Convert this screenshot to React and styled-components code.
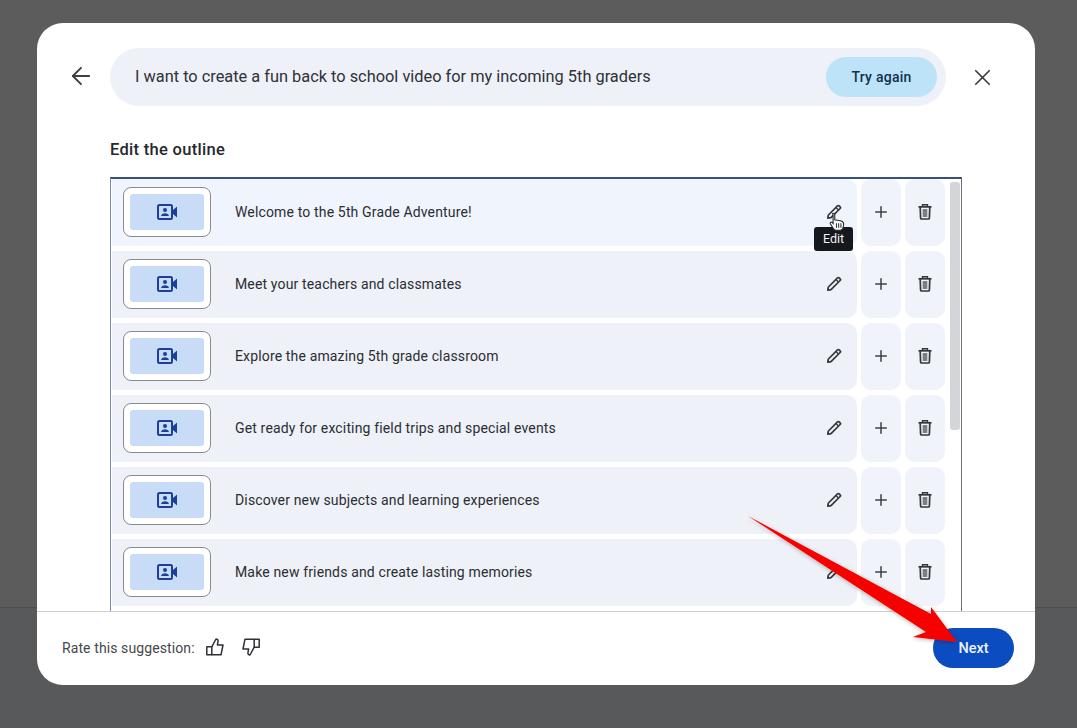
import React from "react";
import styled, { createGlobalStyle } from "styled-components";
import { ArrowLeft, X, Plus } from "lucide-react";

const Global = createGlobalStyle`
  html, body { margin: 0; padding: 0; }
  body { font-family: "Roboto", "Liberation Sans", sans-serif; }
`;

const Page = styled.div`
  position: relative;
  box-sizing: border-box;
  width: 1077px;
  height: 728px;
  overflow: hidden;
  padding: 23px 42px 43px 37px;
  background: linear-gradient(#5c5c5c 0 607px, #4e4e4e 607px 608px, #58595a 608px);
`;

const Modal = styled.div`
  display: flex;
  flex-direction: column;
  height: 100%;
  background: #fff;
  border-radius: 26px;
  overflow: hidden;
`;

const Header = styled.div`
  display: flex;
  align-items: center;
  padding: 25px 0 0 35px;
  height: 58px;
`;

const IconSlot = styled.button`
  display: flex;
  flex: none;
  align-items: center;
  justify-content: center;
  width: ${(p) => p.$w}px;
  margin-left: ${(p) => p.$ml || 0}px;
  padding: 0 0 ${(p) => p.$pb || 0}px;
  border: 0;
  background: none;
  color: #3c4043;
  svg { flex: none; }
`;

const PromptPill = styled.div`
  display: flex;
  flex: none;
  align-items: center;
  justify-content: space-between;
  box-sizing: border-box;
  width: 836px;
  height: 58px;
  margin-left: 20px;
  padding: 0 9px 0 25px;
  border-radius: 29px;
  background: #eef1f8;
`;

const PromptText = styled.span`
  padding-bottom: 2px;
  font-size: 16.37px;
  color: #2f3136;
`;

const RetryButton = styled.button`
  width: 111px;
  height: 40px;
  border: 0;
  border-radius: 20px;
  background: #bde3f8;
  color: #12304f;
  font: 500 14px "Roboto", sans-serif;
  letter-spacing: 0.25px;
`;

const Section = styled.div`
  flex: 1;
  min-height: 0;
  display: flex;
  flex-direction: column;
  padding: 34px 73px 0 73px;
`;

const Title = styled.h2`
  margin: 0 0 17px;
  font-size: 16.5px;
  line-height: 20px;
  font-weight: 500;
  color: #25282c;
  letter-spacing: 0.3px;
`;

const ListFrame = styled.div`
  position: relative;
  flex: 1;
  min-height: 0;
  box-sizing: border-box;
  overflow: hidden;
  padding: 0 16px 0 1px;
  border: 1px solid #6d6f73;
  border-top: 2px solid #37507f;
  border-left-color: #6f8cc0;
  border-bottom: 0;
  display: flex;
  flex-direction: column;
  gap: 5px;
`;

const ScrollThumb = styled.div`
  position: absolute;
  top: 3px;
  right: 1px;
  width: 10px;
  height: 248px;
  border-radius: 3px;
  background: #d4d5d8;
`;

const Row = styled.div`
  display: grid;
  grid-template-columns: 745px 40px 40px;
  column-gap: 4px;
  height: 67px;
  flex: none;
`;

const RowMain = styled.div`
  position: relative;
  display: flex;
  align-items: center;
  padding: 0 0 1px 11px;
  border-radius: 0 10px 10px 0;
  background: ${(p) => (p.$active ? "#f0f4fd" : "#eef1f8")};
`;

const Thumb = styled.div`
  box-sizing: border-box;
  display: flex;
  width: 88px;
  height: 50px;
  padding: 6px;
  background: #fff;
  border: 1px solid #8a8c8f;
  border-radius: 8px;
`;

const ThumbInner = styled.div`
  flex: 1;
  display: flex;
  align-items: center;
  justify-content: center;
  background: #c9dcf7;
  border-radius: 3px;
`;

const RowText = styled.span`
  flex: 1;
  margin-left: 24px;
  padding-bottom: 1px;
  font-size: 14px;
  color: #2b2d31;
  letter-spacing: 0.15px;
`;

const EditSlot = styled.div`
  display: flex;
  justify-content: center;
  width: 40px;
  margin-right: 3px;
`;

const Tooltip = styled.div`
  position: absolute;
  left: 702px;
  top: 48px;
  width: 39px;
  height: 24px;
  border-radius: 3px;
  background: #15181c;
  color: #f2f2f2;
  font-size: 12.5px;
  line-height: 24px;
  text-align: center;
  z-index: 2;
`;

const Cursor = styled.svg`
  position: absolute;
  left: 717px;
  top: 33px;
  z-index: 3;
`;

const ActionTile = styled.div`
  display: flex;
  align-items: center;
  justify-content: center;
  padding-bottom: 1px;
  border-radius: 10px;
  background: #f0f3f9;
  color: #3c4043;
`;

const Footer = styled.div`
  flex: none;
  box-sizing: border-box;
  height: 74px;
  display: flex;
  align-items: center;
  padding: 0 21px 2px 25px;
  border-top: 1px solid #cfcfcf;
`;

const RateLabel = styled.span`
  font-size: 14px;
  color: #45474b;
  letter-spacing: 0.1px;
  margin-right: 11px;
`;

const RateIcon = styled.svg`
  flex: none;
  width: 18px;
  height: 18px;
  margin-right: 18px;
  color: #2f3136;
  transform: ${(p) => (p.$down ? "translateY(-1px) rotate(180deg)" : "translateY(-1px)")};
`;

const NextButton = styled.button`
  margin-left: auto;
  width: 81px;
  height: 40px;
  padding: 2px 0 0;
  border: 0;
  border-radius: 20px;
  background: #0b4cc0;
  color: #eef4ff;
  font: 500 14.5px "Roboto", sans-serif;
`;

const Arrow = styled.svg`
  position: absolute;
  inset: 0;
  pointer-events: none;
  z-index: 5;
`;

const VideoIcon = () => (
  <svg width="21" height="16" viewBox="0 0 21 16" fill="none">
    <rect x="1" y="1" width="14" height="14" rx="1.5" stroke="#1c3f9a" strokeWidth="2" />
    <circle cx="8" cy="6" r="2" fill="#1c3f9a" />
    <path d="M4 12c.4-2 2-2.8 4-2.8s3.600.8 4 2.800z" fill="#1c3f9a" />
    <path d="M16 6l4-3.500v11L16 10z" fill="#1c3f9a" />
  </svg>
);

const PencilIcon = () => (
  <svg width="16" height="16" viewBox="0 0 16 16" fill="none" stroke="#34373b" strokeWidth="1.700" strokeLinejoin="round">
    <path d="M1.800 14.200l.6-3.200L11.500 1.900c.5-.5 1.200-.5 1.700 0l.9.9c.5.5.5 1.200 0 1.700L5 13.600z" />
    <path d="M10 3.500l2.500 2.500" strokeWidth="1.200" />
  </svg>
);

const TrashIcon = () => (
  <svg width="14" height="16" viewBox="0 0 14 16" fill="none">
    <path d="M0.500 2.800h13" stroke="#34373b" strokeWidth="1.700" />
    <path d="M4.500 2.500V.8h5v1.700" stroke="#34373b" strokeWidth="1.400" />
    <path d="M2.200 3l.4 11c0 .6.400 1 1 1h6.800c.6 0 1-.4 1-1l.4-11" stroke="#34373b" strokeWidth="1.700" />
    <rect x="4.700" y="5" width="4.600" height="8" fill="#7b7e83" />
  </svg>
);

const ThumbShape = ({ down }) => (
  <RateIcon $down={down} viewBox="0 0 18 18" fill="none" stroke="currentColor" strokeWidth="1.5" strokeLinejoin="round">
    <path d="M.8 8.800H5.800V16.800H.8z" />
    <path d="M5.800 8.800L10 1c1.600 0 2.300 1 2 2.700L11.400 7H17l-2 9.800H5.800" />
  </RateIcon>
);

const rows = [
  "Welcome to the 5th Grade Adventure!",
  "Meet your teachers and classmates",
  "Explore the amazing 5th grade classroom",
  "Get ready for exciting field trips and special events",
  "Discover new subjects and learning experiences",
  "Make new friends and create lasting memories",
];

export default function App() {
  return (
    <Page>
      <Global />
      <Modal>
        <Header>
          <IconSlot $w={18} $pb={2}><ArrowLeft size={28} strokeWidth={1.6} /></IconSlot>
          <PromptPill>
            <PromptText>I want to create a fun back to school video for my incoming 5th graders</PromptText>
            <RetryButton>Try again</RetryButton>
          </PromptPill>
          <IconSlot $w={20} $ml={26}><X size={27} strokeWidth={1.5} /></IconSlot>
        </Header>
        <Section>
          <Title>Edit the outline</Title>
          <ListFrame>
            <ScrollThumb />
            {rows.map((text, i) => (
              <Row key={text}>
                <RowMain $active={i === 0}>
                  <Thumb><ThumbInner><VideoIcon /></ThumbInner></Thumb>
                  <RowText>{text}</RowText>
                  <EditSlot><PencilIcon /></EditSlot>
                  {i === 0 && <Tooltip>Edit</Tooltip>}
                  {i === 0 && (
                    <Cursor width="16" height="19" viewBox="0 0 14 17">
                      <path d="M3 1.500c1-.8 2-.2 2 1v4.500l5 .8c2 .5 3 1.500 3 3l-.6 3.500c-.3 1.500-1.200 2-2.400 2H6c-1 0-1.800-.5-2.300-1.500L1 10.500c-.5-1 .6-2 1.500-1.200l1 1V2.500z" fill="#fff" stroke="#25282c" strokeWidth="1" />
                      <path d="M6.500 10v4M8.500 10v4M10.500 10v4" stroke="#25282c" strokeWidth="0.900" />
                    </Cursor>
                  )}
                </RowMain>
                <ActionTile><Plus size={18} strokeWidth={2} /></ActionTile>
                <ActionTile><TrashIcon /></ActionTile>
              </Row>
            ))}
          </ListFrame>
        </Section>
        <Footer>
          <RateLabel>Rate this suggestion:</RateLabel>
          <ThumbShape />
          <ThumbShape down />
          <NextButton>Next</NextButton>
        </Footer>
      </Modal>
      <Arrow width="1077" height="728" viewBox="0 0 1077 728">
        <defs>
          <filter id="sh" x="-10%" y="-10%" width="120%" height="120%">
            <feDropShadow dx="0" dy="1" stdDeviation="2" floodColor="#000" floodOpacity="0.3" />
          </filter>
        </defs>
        <polygon points="748,516 931,614 931,607 957,642 913,637 926,632" fill="#f60000" filter="url(#sh)" />
      </Arrow>
    </Page>
  );
}
